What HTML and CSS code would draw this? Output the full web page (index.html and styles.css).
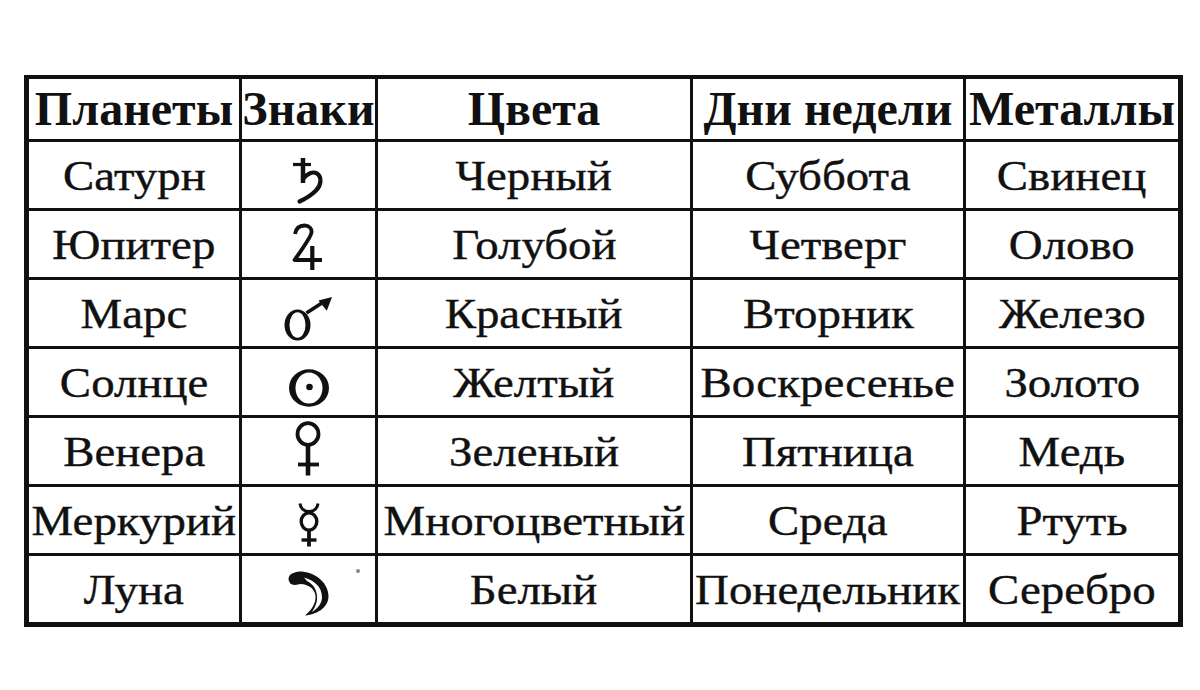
FILE: index.html
```html
<!DOCTYPE html>
<html lang="ru">
<head>
<meta charset="utf-8">
<title>Планеты</title>
<link rel="stylesheet" href="styles.css">
</head>
<body>
<div class="sheet">
  <div class="grid">
    <div class="cell head">Планеты</div>
    <div class="cell head">Знаки</div>
    <div class="cell head">Цвета</div>
    <div class="cell head">Дни недели</div>
    <div class="cell head">Металлы</div>

    <div class="cell"><span class="t">Сатурн</span></div>
    <div class="cell sign">
      <svg class="sym saturn" width="41" height="50" viewBox="0 0 41 50" aria-label="Сатурн">
        <path d="M5 9.5 H23" stroke="#111" stroke-width="3.2" fill="none"/>
        <path d="M15 3 V28" stroke="#111" stroke-width="4.5" fill="none"/>
        <path d="M15 24 C19 18.5, 25 16, 29 18.5 C34 22, 33.5 30, 28 35.5 C23 40.5, 17 44, 11.5 46.5" stroke="#111" stroke-width="4.2" fill="none" stroke-linecap="round"/>
      </svg>
    </div>
    <div class="cell"><span class="t">Черный</span></div>
    <div class="cell"><span class="t">Суббота</span></div>
    <div class="cell"><span class="t">Свинец</span></div>

    <div class="cell"><span class="t">Юпитер</span></div>
    <div class="cell sign">
      <svg class="sym jupiter" width="41" height="52" viewBox="0 0 41 52" aria-label="Юпитер">
        <path d="M7 12 C8 6, 12 3.5, 16.5 3.5 C21 3.5, 24 6.5, 23.5 10.5 C23 15, 17 23, 6.5 38 H34" stroke="#111" stroke-width="3.8" fill="none" stroke-linejoin="round"/>
        <path d="M24.3 24 V48" stroke="#111" stroke-width="4.2" fill="none"/>
      </svg>
    </div>
    <div class="cell"><span class="t">Голубой</span></div>
    <div class="cell"><span class="t">Четверг</span></div>
    <div class="cell"><span class="t">Олово</span></div>

    <div class="cell"><span class="t">Марс</span></div>
    <div class="cell sign">
      <svg class="sym mars" width="50" height="52" viewBox="0 0 50 52" aria-label="Марс">
        <path fill-rule="evenodd" fill="#111" d="M0.5 35 A13 15.5 0 1 0 26.5 35 A13 15.5 0 1 0 0.5 35 Z M5.5 35 A8 12.8 0 1 1 21.5 35 A8 12.8 0 1 1 5.5 35 Z"/>
        <path d="M22.5 23 L41 11" stroke="#111" stroke-width="3.6" fill="none"/>
        <path d="M48 7 L34.5 10.5 L42.8 20.8 Z" fill="#111"/>
      </svg>
    </div>
    <div class="cell"><span class="t">Красный</span></div>
    <div class="cell"><span class="t">Вторник</span></div>
    <div class="cell"><span class="t">Железо</span></div>

    <div class="cell"><span class="t">Солнце</span></div>
    <div class="cell sign">
      <svg class="sym sun" width="44" height="42" viewBox="0 0 44 42" aria-label="Солнце">
        <path fill-rule="evenodd" fill="#111" d="M2 21 A20 18.8 0 1 0 42 21 A20 18.8 0 1 0 2 21 Z M8.5 21 A13.5 15.6 0 1 1 35.5 21 A13.5 15.6 0 1 1 8.5 21 Z"/>
        <circle cx="22.5" cy="20" r="3.3" fill="#111"/>
      </svg>
    </div>
    <div class="cell"><span class="t">Желтый</span></div>
    <div class="cell"><span class="t">Воскресенье</span></div>
    <div class="cell"><span class="t">Золото</span></div>

    <div class="cell"><span class="t">Венера</span></div>
    <div class="cell sign">
      <svg class="sym venus" width="30" height="56" viewBox="0 0 30 56" aria-label="Венера">
        <ellipse cx="14" cy="13" rx="10.5" ry="10.8" stroke="#111" stroke-width="3.8" fill="none"/>
        <path d="M14 23.5 V54.5" stroke="#111" stroke-width="4.6" fill="none"/>
        <path d="M4 43.5 H25" stroke="#111" stroke-width="3.8" fill="none"/>
      </svg>
    </div>
    <div class="cell"><span class="t">Зеленый</span></div>
    <div class="cell"><span class="t">Пятница</span></div>
    <div class="cell"><span class="t">Медь</span></div>

    <div class="cell"><span class="t">Меркурий</span></div>
    <div class="cell sign">
      <svg class="sym mercury" width="26" height="46" viewBox="0 0 26 46" aria-label="Меркурий">
        <path d="M4 1.5 C4.5 6.5, 8 9.5, 13 9.5 C18 9.5, 21.5 6.5, 22 1.5" stroke="#111" stroke-width="3" fill="none"/>
        <ellipse cx="13" cy="19.5" rx="7.8" ry="8.6" stroke="#111" stroke-width="3.4" fill="none"/>
        <path d="M13 28 V44.5" stroke="#111" stroke-width="3.8" fill="none"/>
        <path d="M5.5 38 H20.5" stroke="#111" stroke-width="3.4" fill="none"/>
      </svg>
    </div>
    <div class="cell"><span class="t">Многоцветный</span></div>
    <div class="cell"><span class="t">Среда</span></div>
    <div class="cell"><span class="t">Ртуть</span></div>

    <div class="cell"><span class="t">Луна</span></div>
    <div class="cell sign">
      <svg class="sym moon" width="46" height="50" viewBox="0 0 46 50" aria-label="Луна">
        <path fill="#111" d="M4 6 C7 2, 12 1, 16 1.5 C31 3, 43 14, 42.5 27 C42 37, 32 44.5, 19 45.5 C26 40, 30 33, 29.5 26 C29 19, 23 14.5, 14 14 C10 15.5, 5 14, 3.5 10 Z"/>
        <circle cx="8.5" cy="9" r="6" fill="#111"/>
        <path fill="#fff" d="M18 7.5 C28 10, 36 17, 36 27 C36 33, 32 38.5, 26 42 C30 36, 31.5 31, 31 26 C30.5 19, 27 14, 21 11 Z"/>
      </svg>
      <span class="speck"></span>
    </div>
    <div class="cell"><span class="t">Белый</span></div>
    <div class="cell"><span class="t">Понедельник</span></div>
    <div class="cell"><span class="t">Серебро</span></div>
  </div>
</div>
</body>
</html>
```

FILE: styles.css
```css
html, body {
  margin: 0;
  padding: 0;
  background: #fff;
}

.sheet {
  padding: 75px 0 0 24px;
}

.grid {
  display: grid;
  grid-template-columns: 210px 133px 312px 270px 212px;
  grid-template-rows: 60px repeat(7, 66px);
  gap: 3px;
  width: max-content;
  background: #111;
  border: 5px solid #111;
  border-top-width: 4px;
  font-family: "Liberation Serif", "Times New Roman", serif;
  color: #111;
}

.cell {
  display: flex;
  align-items: center;
  justify-content: center;
  background: #fff;
  font-size: 43px;
  line-height: 1;
  white-space: nowrap;
  overflow: visible;
}

.t {
  display: inline-block;
  transform: scaleX(1.09);
  -webkit-text-stroke: 0.4px #111;
}

.head {
  font-size: 48px;
  font-weight: bold;
}

.sign {
  position: relative;
}

.sym {
  display: block;
}

.saturn { margin-top: 9px; }
.jupiter { margin-top: 7px; }
.mars { margin-top: 5px; }
.sun { margin-top: 11px; }
.venus { margin-top: -4px; }
.mercury { margin-top: 10px; }
.moon { margin-top: 12px; }

.speck {
  position: absolute;
  left: 114px;
  top: 13px;
  width: 4px;
  height: 4px;
  border-radius: 50%;
  background: #888;
}
```
